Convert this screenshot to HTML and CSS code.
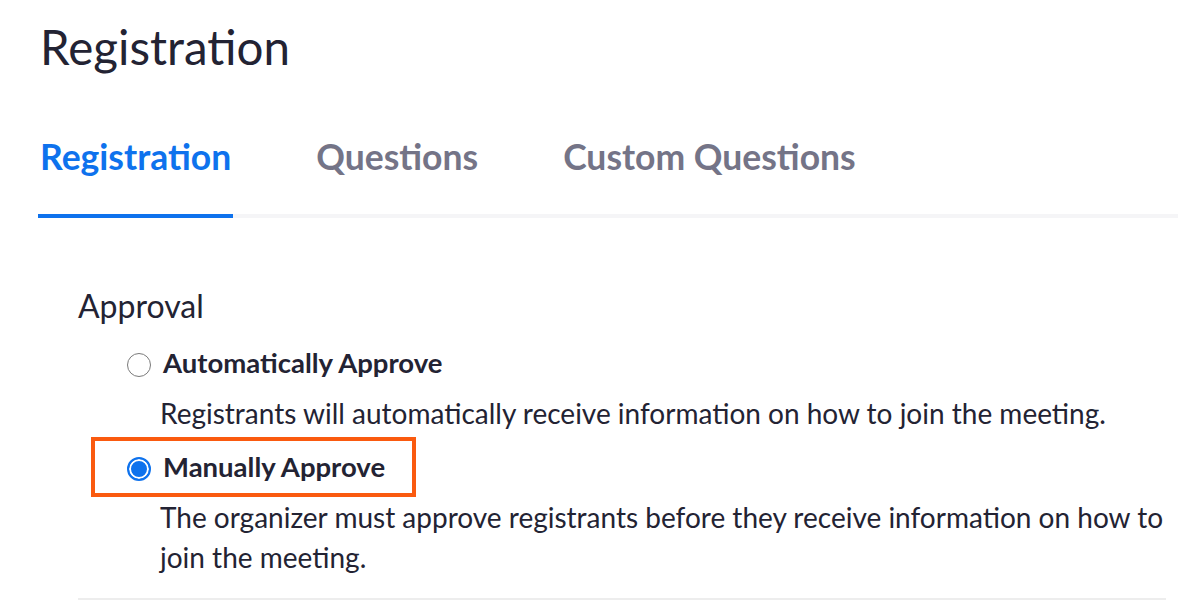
FILE: index.html
```html
<!DOCTYPE html>
<html lang="en">
<head>
  <meta charset="UTF-8">
  <meta name="viewport" content="width=device-width, initial-scale=1.0">
  <title>Registration</title>
  <link rel="stylesheet" href="styles.css">
</head>
<body>
  <h1 class="page-title">Registration</h1>

  <div class="tabs">
    <div class="tab active">Registration</div>
    <div class="tab">Questions</div>
    <div class="tab">Custom Questions</div>
  </div>

  <div class="section">
    <h2 class="section-title">Approval</h2>
    <div class="options">
      <label class="option-row">
        <input type="radio" name="approval" value="auto">
        <span class="option-label">Automatically Approve</span>
      </label>
      <p class="option-desc">Registrants will automatically receive information on how to join the meeting.</p>

      <label class="option-row highlight">
        <input type="radio" name="approval" value="manual" checked>
        <span class="option-label">Manually Approve</span>
      </label>
      <p class="option-desc">The organizer must approve registrants before they receive information on how to join the meeting.</p>
    </div>
  </div>
</body>
</html>
```

FILE: styles.css
```css
body {
  margin: 0;
  padding: 17px 0 0 40px;
  font-family: Lato, "Open Sans", sans-serif;
  color: #232333;
  background: #ffffff;
}
.page-title {
  margin: 0;
  font-size: 47.5px;
  line-height: 60px;
  font-weight: 400;
}
.tabs {
  display: flex;
  gap: 81px;
  margin: 58px 0 0 -2px;
  border-bottom: 4px solid #f5f5f7;
}
.tab {
  padding: 0 2px 35px;
  margin-bottom: -4px;
  font-size: 35.5px;
  line-height: 44px;
  font-weight: 700;
  color: #747487;
  border-bottom: 4px solid transparent;
}
.tab.active {
  color: #0e72ed;
  border-bottom-color: #0e72ed;
  border-radius: 3px 3px 0 0;
}
.section {
  margin: 68px 12px 0 38px;
  padding-bottom: 17px;
  border-bottom: 2px solid #ededed;
}
.section-title {
  margin: 0;
  font-size: 32px;
  line-height: 40px;
  font-weight: 400;
}
.options {
  padding: 7px 0 0 13px;
}
.option-row {
  display: flex;
  align-items: center;
  gap: 12px;
  width: fit-content;
  padding: 8px 27px 8px 32px;
  border: 4px solid transparent;
}
.option-row.highlight {
  border-color: #fa5a0f;
}
.option-row input {
  appearance: none;
  -webkit-appearance: none;
  margin: 0;
  width: 24px;
  height: 24px;
  border: 1.5px solid #7a7a7a;
  border-radius: 50%;
  background: #fff;
  position: relative;
  top: 2px;
}
.option-row input:checked {
  border: 2px solid #0e72ed;
  background: #0e72ed;
  box-shadow: inset 0 0 0 2px #fff;
}
.option-label {
  font-size: 27.5px;
  line-height: 36px;
  font-weight: 700;
}
.option-desc {
  margin: 0 0 4px;
  padding-left: 69px;
  font-size: 28px;
  line-height: 40px;
}
```
